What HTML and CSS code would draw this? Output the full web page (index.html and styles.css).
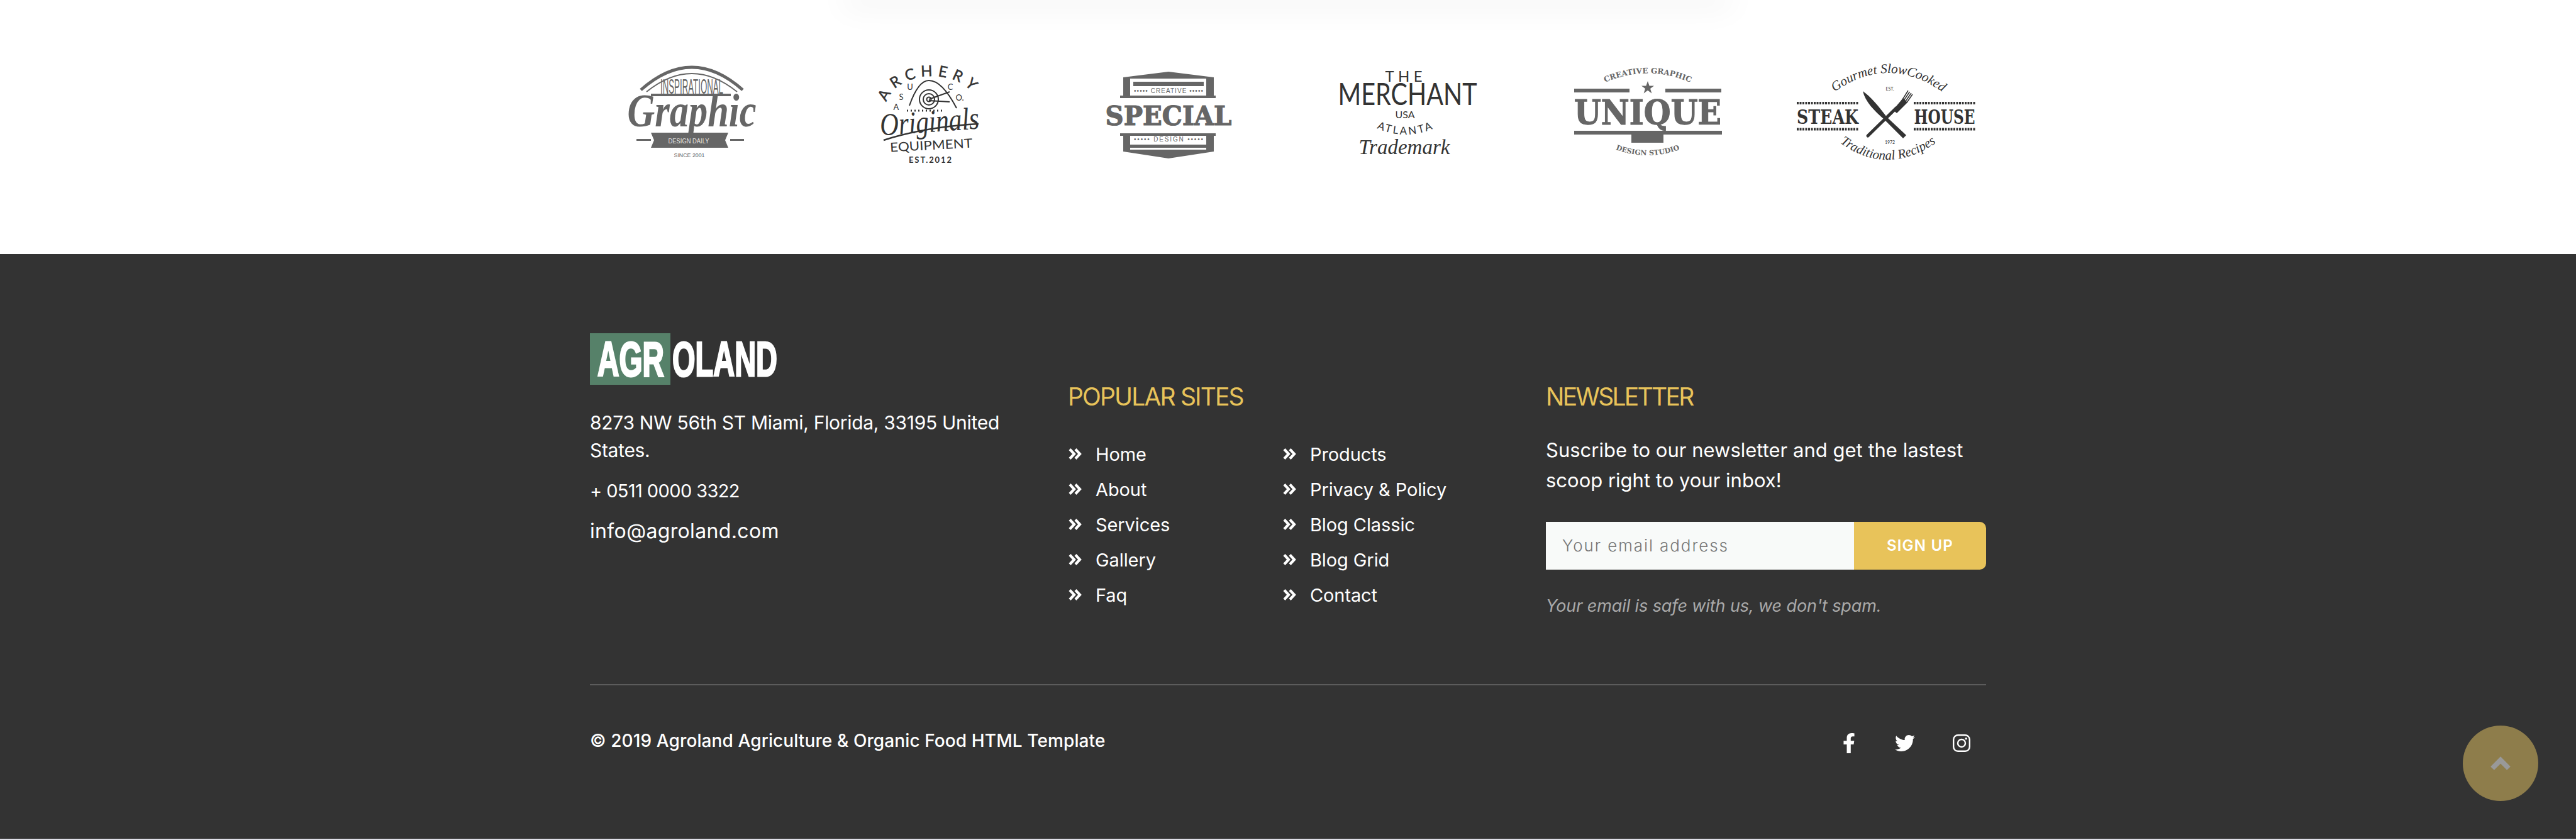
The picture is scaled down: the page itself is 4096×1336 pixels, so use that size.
FILE: index.html
```html
<!DOCTYPE html>
<html lang="en">
<head>
<meta charset="utf-8">
<title>Agroland</title>
<link rel="stylesheet" href="styles.css">
</head>
<body>
<div class="shadow-strip"><div class="shadow-card"></div></div>
<section class="brands">
  <svg class="brand" viewBox="0 0 300 200">
    <path class="st" stroke-width="5" d="M69 63 Q150 -9 231 63"/>
    <path class="st" stroke-width="2" d="M78 66 Q150 8 222 66"/>
    <text class="cond" x="150" y="69" font-size="34" text-anchor="middle" textLength="100" lengthAdjust="spacingAndGlyphs">INSPIRATIONAL</text>
    <rect class="fl" x="85" y="69" width="127" height="4"/>
    <path class="fl" d="M85 131H208L203 143 208 155H85L90 143Z"/>
    <rect class="fl" x="62" y="141" width="23" height="3"/><rect class="fl" x="211" y="141" width="22" height="3"/>
    <text class="script" x="150" y="121" font-size="74" text-anchor="middle" textLength="205" lengthAdjust="spacingAndGlyphs">Graphic</text>
    <text class="cond w" x="145" y="148" font-size="11" text-anchor="middle" textLength="65" lengthAdjust="spacingAndGlyphs">DESIGN DAILY</text>
    <text class="cond" x="146" y="170" font-size="9" text-anchor="middle" textLength="49" lengthAdjust="spacingAndGlyphs">SINCE 2001</text>
  </svg>
  <svg class="brand" viewBox="0 0 300 200">
    <defs><path id="p2" d="M80 90 A72 48 0 0 1 222 78"/></defs>
    <text class="dark sans bold-ish" font-size="24"><textPath href="#p2" startOffset="50%" text-anchor="middle" letter-spacing="8">ARCHERY</textPath></text>
    <g class="tgt">
      <circle cx="147" cy="78" r="15"/><circle cx="147" cy="78" r="9"/><circle cx="147" cy="78" r="3.5"/>
      <path d="M147 78 180 66M147 80 180 82"/>
      <path d="M116 88 Q130 48 147 48 Q168 48 191 92"/>
      <path class="dots" d="M112 96 H172"/>
    </g>
    <text class="dark sans" x="117" y="63" font-size="13" text-anchor="middle">U</text>
    <text class="dark sans" x="181" y="63" font-size="13" text-anchor="middle">C</text>
    <text class="dark sans" x="103" y="79" font-size="13" text-anchor="middle">S</text>
    <text class="dark sans" x="196" y="80" font-size="13" text-anchor="middle">O.</text>
    <text class="dark sans" x="95" y="95" font-size="13" text-anchor="middle">A</text>
    <text class="dark script2" x="149" y="130" font-size="50" text-anchor="middle" textLength="158" lengthAdjust="spacingAndGlyphs" transform="rotate(-4 149 130)">Originals</text>
    <path class="dk" stroke-width="2.5" d="M75 143 Q140 122 226 117"/>
    <text class="dark sans" x="151" y="158" font-size="20" text-anchor="middle" textLength="131" lengthAdjust="spacingAndGlyphs" transform="rotate(-3 151 158)">EQUIPMENT</text>
    <text class="dark sans b" x="149" y="179" font-size="13" text-anchor="middle" textLength="68">EST.2012</text>
  </svg>
  <svg class="brand" viewBox="0 0 300 200">
    <path class="fl" d="M76 43 148 34 220 43V73H76Z"/>
    <path class="wh" d="M87 45H208V72H87Z"/>
    <rect class="fl" x="92" y="50" width="112" height="7"/>
    <rect class="fl" x="71" y="72" width="152" height="4"/>
    <text class="cond" x="148" y="68" font-size="10" text-anchor="middle" textLength="110">••••• CREATIVE •••••</text>
    <text class="slab heavy" x="148" y="119" font-size="42" text-anchor="middle" textLength="201" lengthAdjust="spacingAndGlyphs">SPECIAL</text>
    <rect class="fl" x="71" y="132" width="152" height="4"/>
    <path class="fl" d="M76 135H87V150H208V135H220V161L148 172 76 161Z"/>
    <path class="wh" d="M87 155H208V158H87Z"/>
    <text class="cond" x="148" y="145" font-size="10" text-anchor="middle" textLength="110">••••• DESIGN •••••</text>
  </svg>
  <svg class="brand" viewBox="0 0 300 200">
    <defs><path id="p4" d="M84 116 Q144 152 206 116"/></defs>
    <text class="dark sans" x="142" y="50" font-size="24" text-anchor="middle" textLength="59">THE</text>
    <text class="dark sans" x="148" y="87" font-size="48" text-anchor="middle" textLength="221" lengthAdjust="spacingAndGlyphs">MERCHANT</text>
    <text class="dark sans" x="144" y="108" font-size="16" text-anchor="middle">USA</text>
    <text class="dark sans" font-size="17"><textPath href="#p4" startOffset="50%" text-anchor="middle" letter-spacing="3">ATLANTA</textPath></text>
    <text class="dark script2" x="143" y="165" font-size="34" text-anchor="middle" textLength="145" lengthAdjust="spacingAndGlyphs">Trademark</text>
  </svg>
  <svg class="brand" viewBox="0 0 300 200">
    <defs><path id="p5" d="M78 53 Q150 20 222 53"/><path id="p5b" d="M90 154 Q150 180 210 154"/></defs>
    <text class="slab" font-size="12"><textPath href="#p5" startOffset="50%" text-anchor="middle">CREATIVE GRAPHIC</textPath></text>
    <path class="fl" d="M150 49l2.6 7.4h7.4l-6 4.6 2.4 7.4-6.4-4.6-6.4 4.6 2.4-7.4-6-4.6h7.4Z"/>
    <rect class="fl" x="33" y="61" width="88" height="6"/><rect class="fl" x="178" y="61" width="89" height="6"/>
    <text class="slab heavy" x="150" y="118" font-size="54" text-anchor="middle" textLength="234" lengthAdjust="spacingAndGlyphs">UNIQUE</text>
    <rect class="fl" x="33" y="128" width="235" height="6"/><rect class="fl" x="124" y="134" width="51" height="13"/>
    <text class="slab" font-size="11"><textPath href="#p5b" startOffset="50%" text-anchor="middle">DESIGN STUDIO</textPath></text>
  </svg>
  <svg class="brand" viewBox="0 0 300 200">
    <defs><path id="p6" d="M62 70 Q152 2 244 70"/><path id="p6b" d="M74 146 Q150 202 230 146"/></defs>
    <text class="dark script2" font-size="21"><textPath href="#p6" startOffset="50%" text-anchor="middle">Gourmet SlowCooked</textPath></text>
    <text class="dark sans" x="155" y="64" font-size="7" text-anchor="middle">EST.</text>
    <path class="zig" d="M7 84H105M7 125.500H105M193 84H292M193 125.500H292"/>
    <text class="dark slab" x="56" y="117" font-size="32" text-anchor="middle" textLength="98" lengthAdjust="spacingAndGlyphs">STEAK</text>
    <text class="dark slab" x="242" y="117" font-size="32" text-anchor="middle" textLength="97" lengthAdjust="spacingAndGlyphs">HOUSE</text>
    <path class="dkfl" d="M112 65C124 73 138 90 150 106L181 135 176 140 146 110C130 96 116 82 112 65Z"/>
    <path class="dk" stroke-width="5" stroke-linecap="round" d="M165 92 120 136"/>
    <path class="dkfl" d="M160 95 176 76 183 83 166 100Z"/>
    <path class="dk" stroke-width="1.500" d="M174 80 184 64M177 80 186.500 66M180 81 189 68M182 83 191 70"/>
    <text class="dark sans" x="155" y="149" font-size="7" text-anchor="middle">1972</text>
    <text class="dark script2" font-size="21"><textPath href="#p6b" startOffset="50%" text-anchor="middle">Traditional Recipes</textPath></text>
  </svg>
</section>

<footer class="footer">
  <div class="container">
    <div class="widgets">
      <div class="col about">
        <svg class="logo" viewBox="0 0 310 82" width="310" height="82">
          <rect class="logo-mark" width="128" height="82"/>
          <text class="logo-text" transform="translate(12 68) scale(.62 1)" font-size="77">AGR</text>
          <text class="logo-text" transform="translate(131 68) scale(.61 1)" font-size="77">OLAND</text>
        </svg>
        <p class="addr">8273 NW 56th ST Miami, Florida, 33195 United States.</p>
        <p class="phone">+ 0511 0000 3322</p>
        <p class="mail">info@agroland.com</p>
      </div>
      <div class="col sites">
        <h4 class="title">POPULAR SITES</h4>
        <div class="links">
          <ul>
            <li><svg class="chev" viewBox="0 0 24 20"><path d="M3 2.500l7 7.500-7 7.500M12 2.500l7 7.500-7 7.500"/></svg>Home</li>
            <li><svg class="chev" viewBox="0 0 24 20"><path d="M3 2.500l7 7.500-7 7.500M12 2.500l7 7.500-7 7.500"/></svg>About</li>
            <li><svg class="chev" viewBox="0 0 24 20"><path d="M3 2.500l7 7.500-7 7.500M12 2.500l7 7.500-7 7.500"/></svg>Services</li>
            <li><svg class="chev" viewBox="0 0 24 20"><path d="M3 2.500l7 7.500-7 7.500M12 2.500l7 7.500-7 7.500"/></svg>Gallery</li>
            <li><svg class="chev" viewBox="0 0 24 20"><path d="M3 2.500l7 7.500-7 7.500M12 2.500l7 7.500-7 7.500"/></svg>Faq</li>
          </ul>
          <ul>
            <li><svg class="chev" viewBox="0 0 24 20"><path d="M3 2.500l7 7.500-7 7.500M12 2.500l7 7.500-7 7.500"/></svg>Products</li>
            <li><svg class="chev" viewBox="0 0 24 20"><path d="M3 2.500l7 7.500-7 7.500M12 2.500l7 7.500-7 7.500"/></svg>Privacy &amp; Policy</li>
            <li><svg class="chev" viewBox="0 0 24 20"><path d="M3 2.500l7 7.500-7 7.500M12 2.500l7 7.500-7 7.500"/></svg>Blog Classic</li>
            <li><svg class="chev" viewBox="0 0 24 20"><path d="M3 2.500l7 7.500-7 7.500M12 2.500l7 7.500-7 7.500"/></svg>Blog Grid</li>
            <li><svg class="chev" viewBox="0 0 24 20"><path d="M3 2.500l7 7.500-7 7.500M12 2.500l7 7.500-7 7.500"/></svg>Contact</li>
          </ul>
        </div>
      </div>
      <div class="col news">
        <h4 class="title">NEWSLETTER</h4>
        <p class="lead">Suscribe to our newsletter and get the lastest scoop right to your inbox!</p>
        <form class="sub">
          <div class="field">Your email address</div>
          <div class="btn">SIGN UP</div>
        </form>
        <p class="safe">Your email is safe with us, we don't spam.</p>
      </div>
    </div>
    <div class="bottom">
      <p class="copy">© 2019 Agroland Agriculture &amp; Organic Food HTML Template</p>
      <div class="social">
        <svg class="fb" viewBox="0 0 320 512" width="20" height="32"><path d="M279.14 288l14.22-92.66h-88.91v-60.13c0-25.35 12.42-50.06 52.24-50.06h40.42V6.26S260.43 0 225.36 0c-73.22 0-121.08 44.38-121.08 124.72v70.62H22.89V288h81.39v224h100.17V288z"/></svg>
        <svg class="tw" viewBox="0 0 512 512" width="32" height="32"><path d="M459.37 151.716c.325 4.548.325 9.097.325 13.645 0 138.72-105.583 298.558-298.558 298.558-59.452 0-114.68-17.219-161.137-47.106 8.447.974 16.568 1.299 25.34 1.299 49.055 0 94.213-16.568 130.274-44.832-46.132-.975-84.792-31.188-98.112-72.772 6.498.974 12.995 1.624 19.818 1.624 9.421 0 18.843-1.3 27.614-3.573-48.081-9.747-84.143-51.98-84.143-102.985v-1.299c13.969 7.797 30.214 12.67 47.431 13.319-28.264-18.843-46.781-51.005-46.781-87.391 0-19.492 5.197-37.36 14.294-52.954 51.655 63.675 129.3 105.258 216.365 109.807-1.624-7.797-2.599-15.918-2.599-24.04 0-57.828 46.782-104.934 104.934-104.934 30.213 0 57.502 12.67 76.67 33.137 23.715-4.548 46.456-13.32 66.599-25.34-7.798 24.366-24.366 44.833-46.132 57.827 21.117-2.273 41.584-8.122 60.426-16.243-14.292 20.791-32.161 39.308-52.628 54.253z"/></svg>
        <svg class="ig" viewBox="0 0 28 28" width="28" height="28"><rect x="1.200" y="1.200" width="25.600" height="25.600" rx="7"/><circle cx="14" cy="14" r="6"/><circle class="dot" cx="21.200" cy="6.800" r="1.700"/></svg>
      </div>
    </div>
  </div>
</footer>
<div class="page-end"></div>
<a class="to-top"><svg viewBox="0 0 32 22" width="32" height="22"><path d="M3 19 16 6l13 13"/></svg></a>
</body>
</html>
```

FILE: styles.css
```css
* { box-sizing: border-box; }
html, body { margin: 0; padding: 0; }
body {
  width: 4096px;
  height: 1336px;
  overflow: hidden;
  background: #fff;
  font-family: "Inter", "Open Sans", sans-serif;
  color: #fff;
  position: relative;
}
p, h4, ul { margin: 0; padding: 0; }
ul { list-style: none; }

.shadow-strip { height: 0; display: flex; justify-content: center; }
.shadow-card {
  width: 1396px;
  height: 0;
  box-shadow: 0 0 50px 10px rgba(0, 0, 0, .07);
}

.brands {
  height: 404px;
  padding: 80px 0 0 910px;
  display: grid;
  grid-template-columns: repeat(6, 380px);
  justify-items: center;
  align-items: start;
}
.brand { display: block; width: 300px; height: 200px; overflow: visible; }
.brand text { fill: #666; }
.brand text.dark { fill: #333; }
.brand text.w { fill: #e4e4e4; }
.brand .st { fill: none; stroke: #666; }
.brand .fl { fill: #666; }
.brand .wh { fill: #fff; }
.brand .dk { fill: none; stroke: #333; }
.brand .dkfl { fill: #333; }
.brand .zig { fill: none; stroke: #333; stroke-width: 4; stroke-dasharray: 3 1.5; }
.brand .tgt { fill: none; stroke: #333; stroke-width: 2; }
.brand .dots { stroke-width: 3; stroke-dasharray: 2 4; }
.cond { font-family: "Liberation Sans", sans-serif; }
.script { font-family: "Liberation Serif", serif; font-style: italic; font-weight: 700; }
.script2 { font-family: "Liberation Serif", serif; font-style: italic; }
.slab { font-family: "DejaVu Serif", serif; font-weight: 700; }
.brand text.heavy { stroke: #666; stroke-width: 1.2; }
.brand text.bold-ish { stroke: #333; stroke-width: .5; }
.sans { font-family: "Lato", sans-serif; }
.sans.b { font-weight: 700; }

.footer {
  height: 930px;
  background: #333;
  padding-top: 126px;
}
.container { width: 2220px; margin-left: 938px; }
.widgets { display: flex; height: 558px; }
.col { width: 760px; flex: none; }
.logo { display: block; }
.logo-mark { fill: #568169; }
.logo-text {
  font-family: "Liberation Sans", sans-serif;
  font-weight: 700;
  fill: #fff;
  stroke: #fff;
  stroke-width: 3;
}
.addr {
  width: 670px;
  margin-top: 38px;
  font-size: 30px;
  line-height: 44px;
  letter-spacing: -.3px;
}
.phone { margin-top: 21px; font-size: 29px; line-height: 44px; letter-spacing: -.6px; }
.mail { margin-top: 20px; font-size: 32px; line-height: 44px; letter-spacing: .35px; }

.title {
  margin-top: 73px;
  font-size: 39px;
  line-height: 56px;
  font-weight: 400;
  color: #e8c35a;
  letter-spacing: -1.85px;
}
.news .title { letter-spacing: -2.7px; }
.links { display: flex; margin-top: 35px; }
.links ul { width: 341px; }
.links li {
  display: flex;
  align-items: center;
  height: 56px;
  font-size: 29px;
  letter-spacing: -.1px;
}
.chev {
  width: 24px;
  height: 20px;
  margin-right: 20px;
  fill: none;
  stroke: #fff;
  stroke-width: 4.2;
  flex: none;
}
.lead {
  margin-top: 33px;
  font-size: 31px;
  line-height: 48px;
  letter-spacing: 0;
  width: 700px;
}
.sub { display: flex; width: 700px; height: 76px; margin-top: 42px; }
.field {
  width: 490px;
  height: 76px;
  background: #f8faf9;
  color: #777;
  font-size: 26px;
  line-height: 76px;
  padding-left: 26px;
  letter-spacing: 1.9px;
  font-weight: 300;
}
.btn {
  width: 210px;
  height: 76px;
  background: #e8c35a;
  border-radius: 0 10px 10px 0;
  font-size: 24px;
  line-height: 76px;
  text-align: center;
  font-weight: 600;
  letter-spacing: 1.2px;
}
.safe {
  margin-top: 38px;
  font-size: 27px;
  line-height: 40px;
  font-style: italic;
  color: #a9a9a9;
  letter-spacing: -.1px;
}
.bottom {
  border-top: 2px solid #5c5c5c;
  display: flex;
  justify-content: space-between;
  padding-top: 66px;
}
.copy { font-size: 28px; line-height: 44px; letter-spacing: .1px; font-weight: 500; }
.social { display: flex; align-items: center; gap: 60px; padding-right: 25px; height: 52px; }
.social svg { fill: #fff; display: block; }
.social .fb { margin-right: 3px; }
.social .ig { fill: none; stroke: #fff; stroke-width: 2.4; }
.social .ig .dot { fill: #fff; stroke: none; }

.page-end { height: 2px; background: #e0e0e8; }
.to-top {
  position: absolute;
  left: 3916px;
  top: 1154px;
  width: 120px;
  height: 120px;
  border-radius: 50%;
  background: #8e7d4b;
  display: flex;
  align-items: center;
  justify-content: center;
}
.to-top svg { fill: none; stroke: #999; stroke-width: 8; }
```
